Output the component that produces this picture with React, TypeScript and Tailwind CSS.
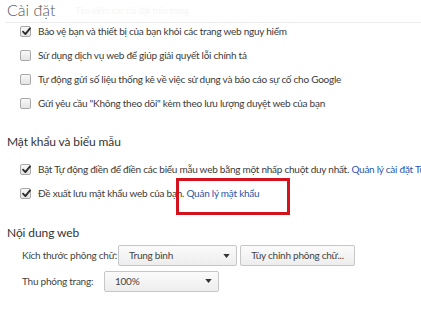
import React from "react";

function Check({ checked }: { checked?: boolean }) {
  return (
    <div className="relative w-[11px] h-[11px] shrink-0 rounded-[2px] border border-[#a9a9a9] bg-gradient-to-b from-[#f8f8f8] to-[#e4e4e4]">
      {checked && (
        <svg viewBox="0 0 12 12" className="absolute left-[0px] top-[-1px] w-[11px] h-[11px]">
          <path d="M2.2 6.2 L4.8 8.8 L9.8 2.6" fill="none" stroke="#2a2a2a" strokeWidth="2" strokeLinecap="round" strokeLinejoin="round" />
        </svg>
      )}
    </div>
  );
}

function Row({ checked, children }: { checked?: boolean; children: React.ReactNode }) {
  return (
    <div className="h-[24px] flex items-start pt-[2px] pl-[20px] gap-[7px] whitespace-nowrap">
      <div className="h-[12px] flex items-center">
        <Check checked={checked} />
      </div>
      <div className="leading-[12px]">{children}</div>
    </div>
  );
}

function Select({ w, label }: { w: string; label: string }) {
  return (
    <div className={`h-[21px] ${w} shrink-0 flex items-center justify-between rounded-[2px] border border-[#c6c6c6] bg-gradient-to-b from-[#fbfbfb] to-[#ededed] pl-[10px] pr-[6px]`}>
      <span>{label}</span>
      <svg viewBox="0 0 8 5" className="w-[7px] h-[4px]">
        <path d="M0 0 H8 L4 5 Z" fill="#333" />
      </svg>
    </div>
  );
}

export default function App() {
  return (
    <div className="relative w-[421px] h-[312px] overflow-hidden bg-white text-[#3a3a3a] text-[10px] tracking-[-0.25px] font-['Lato',sans-serif]">
      <div className="h-[23px] ml-[5px] border-b border-[#ececec] flex items-start">
        <div className="pl-[2px] text-[16px] leading-[20px] tracking-normal font-light text-[#555]">Cài đặt</div>
        <div className="ml-[20px] mt-[6px] text-[9px] leading-[10px] text-[#f6f6f6] whitespace-nowrap">Tìm kiếm các cài đặt trên trang</div>
      </div>
      <div className="flex flex-col">
        <Row checked>Bảo vệ bạn và thiết bị của bạn khỏi các trang web nguy hiểm</Row>
        <Row>Sử dụng dịch vụ web để giúp giải quyết lỗi chính tả</Row>
        <Row>Tự động gửi số liệu thống kê về việc sử dụng và báo cáo sự cố cho Google</Row>
        <Row>Gửi yêu cầu "Không theo dõi" kèm theo lưu lượng duyệt web của bạn</Row>
      </div>

      <div className="mt-[15px] pl-[7px] text-[12px] leading-[16px] tracking-[-0.1px] text-[#333]">Mật khẩu và biểu mẫu</div>
      <div className="mt-[11px] flex flex-col">
        <Row checked>
          Bật Tự động điền để điền các biểu mẫu web bằng một nhấp chuột duy nhất.{" "}
          <span className="text-[#2c55a8]">Quản lý cài đặt Tự động điền</span>
        </Row>
        <Row checked>
          Đề xuất lưu mật khẩu web của bạn. <span className="text-[#2c55a8]">Quản lý mật khẩu</span>
        </Row>
      </div>

      <div className="mt-[16px] pl-[7px] text-[12px] leading-[16px] tracking-[-0.1px] text-[#333]">Nội dung web</div>
      <div className="mt-[4px] flex flex-col gap-[5px] pl-[22px] text-[#444]">
        <div className="flex items-center h-[21px]">
          <div className="w-[96px] whitespace-nowrap">Kích thước phông chữ:</div>
          <Select w="w-[119px]" label="Trung bình" />
          <div className="ml-[3px] h-[21px] w-[115px] shrink-0 flex items-center justify-center rounded-[2px] border border-[#c6c6c6] bg-gradient-to-b from-[#fbfbfb] to-[#ededed] whitespace-nowrap">
            Tùy chỉnh phông chữ...
          </div>
        </div>
        <div className="flex items-center h-[20px]">
          <div className="w-[82px] whitespace-nowrap">Thu phóng trang:</div>
          <Select w="w-[115px]" label="100%" />
        </div>
      </div>

      <div className="mt-[18px] pl-[7px] text-[12px] leading-[16px] text-[#333]">Mạng</div>

      <div className="absolute left-[176px] top-[178px] w-[114px] h-[37px] border-[3px] border-[#d3121d]" />
    </div>
  );
}
